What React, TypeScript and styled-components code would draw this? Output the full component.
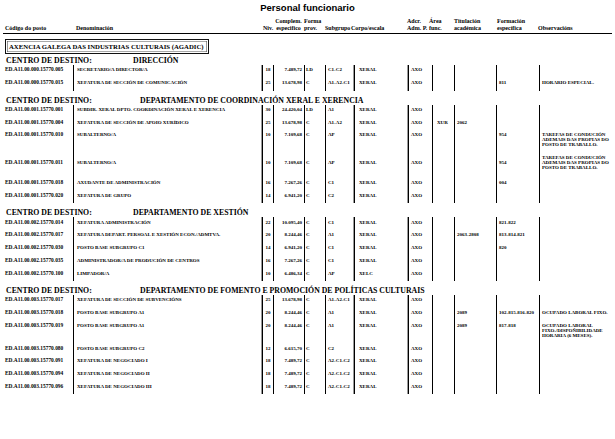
import React from 'react';
import styled, { createGlobalStyle } from 'styled-components';

const GlobalStyle = createGlobalStyle`
  html, body { margin: 0; padding: 0; background: #fff; }
  body { font-family: 'Liberation Serif', 'Times New Roman', serif; color: #000; }
`;

const COLS = '73px 189px 11px 31px 21px 29px 54px 24px 22px 42px 43px 76px';
const HEAD_COLS = '70px 189px 11px 31px 21px 26px 56px 20px 27px 43px 41px 74px';

interface Post {
  code: string;
  name: string;
  niv: string;
  complem: string;
  forma: string;
  subgrupo: string;
  corpo: string;
  adcr: string;
  area?: string;
  tit?: string;
  form?: string;
  obs?: string[];
  h?: number;
  lead?: number;
}

interface Centre {
  name: string;
  indent: number;
  posts: Post[];
}

const TAREFAS = ['TAREFAS DE CONDUCIÓN', 'ADEMAIS DAS PROPIAS DO', 'POSTO DE TRABALLO.'];

const centres: Centre[] = [
  {
    name: 'DIRECCIÓN',
    indent: 133,
    posts: [
      { code: 'ED.A11.00.000.15770.005', name: 'SECRETARIO/A DIRECTOR/A', niv: '18', complem: '7.489,72', forma: 'LD', subgrupo: 'C1-C2', corpo: 'XERAL', adcr: 'AXO', h: 13 },
      { code: 'ED.A11.00.000.15770.015', name: 'XEFATURA DE SECCIÓN DE COMUNICACIÓN', niv: '25', complem: '13.678,98', forma: 'C', subgrupo: 'A1-A2-C1', corpo: 'XERAL', adcr: 'AXO', form: '811', obs: ['HORARIO ESPECIAL.'], h: 13 },
    ],
  },
  {
    name: 'DEPARTAMENTO DE COORDINACIÓN XERAL E XERENCIA',
    indent: 140,
    posts: [
      { code: 'ED.A11.00.001.15770.001', name: 'SUBDIR. XERAL DPTO. COORDINACIÓN XERAL E XERENCIA', niv: '30', complem: '24.420,04', forma: 'LD', subgrupo: 'A1', corpo: 'XERAL', adcr: 'AXO' },
      { code: 'ED.A11.00.001.15770.004', name: 'XEFATURA DE SECCIÓN DE APOIO XURÍDICO', niv: '25', complem: '13.678,98', forma: 'C', subgrupo: 'A1-A2', corpo: 'XERAL', adcr: 'AXO', area: 'XUR', tit: '2062' },
      { code: 'ED.A11.00.001.15770.010', name: 'SUBALTERNO/A', niv: '10', complem: '7.109,68', forma: 'C', subgrupo: 'AP', corpo: 'XERAL', adcr: 'AXO', form: '954', obs: TAREFAS, h: 23 },
      { code: 'ED.A11.00.001.15770.011', name: 'SUBALTERNO/A', niv: '10', complem: '7.109,68', forma: 'C', subgrupo: 'AP', corpo: 'XERAL', adcr: 'AXO', form: '954', obs: TAREFAS, h: 25, lead: 5 },
      { code: 'ED.A11.00.001.15770.018', name: 'AXUDANTE DE ADMINISTRACIÓN', niv: '16', complem: '7.267,26', forma: 'C', subgrupo: 'C1', corpo: 'XERAL', adcr: 'AXO', form: '004' },
      { code: 'ED.A11.00.001.15770.020', name: 'XEFATURA DE GRUPO', niv: '14', complem: '6.941,20', forma: 'C', subgrupo: 'C2', corpo: 'XERAL', adcr: 'AXO' },
    ],
  },
  {
    name: 'DEPARTAMENTO DE XESTIÓN',
    indent: 133,
    posts: [
      { code: 'ED.A11.00.002.15770.014', name: 'XEFATURA ADMINISTRACIÓN', niv: '22', complem: '10.095,40', forma: 'C', subgrupo: 'C1', corpo: 'XERAL', adcr: 'AXO', form: '821-822' },
      { code: 'ED.A11.00.002.15770.017', name: 'XEFATURA DEPART. PERSOAL E XESTIÓN ECON./ADMTVA.', niv: '20', complem: '8.244,46', forma: 'C', subgrupo: 'A1', corpo: 'XERAL', adcr: 'AXO', tit: '2063-2808', form: '813-814-821' },
      { code: 'ED.A11.00.002.15770.030', name: 'POSTO BASE SUBGRUPO C1', niv: '14', complem: '6.941,20', forma: 'C', subgrupo: 'C1', corpo: 'XERAL', adcr: 'AXO', form: '820' },
      { code: 'ED.A11.00.002.15770.035', name: 'ADMINISTRADOR/A DE PRODUCIÓN DE CENTROS', niv: '16', complem: '7.267,26', forma: 'C', subgrupo: 'C1', corpo: 'XERAL', adcr: 'AXO' },
      { code: 'ED.A11.00.002.15770.100', name: 'LIMPADOR/A', niv: '10', complem: '6.486,34', forma: 'C', subgrupo: 'AP', corpo: 'XELC', adcr: 'AXO' },
    ],
  },
  {
    name: 'DEPARTAMENTO DE FOMENTO E PROMOCIÓN DE POLÍTICAS CULTURAIS',
    indent: 140,
    posts: [
      { code: 'ED.A11.00.003.15770.017', name: 'XEFATURA DE SECCIÓN DE SUBVENCIÓNS', niv: '25', complem: '13.678,98', forma: 'C', subgrupo: 'A1-A2-C1', corpo: 'XERAL', adcr: 'AXO' },
      { code: 'ED.A11.00.003.15770.018', name: 'POSTO BASE SUBGRUPO A1', niv: '20', complem: '8.244,46', forma: 'C', subgrupo: 'A1', corpo: 'XERAL', adcr: 'AXO', tit: '2089', form: '102-815-816-820', obs: ['OCUPADO LABORAL FIXO.'] },
      { code: 'ED.A11.00.003.15770.019', name: 'POSTO BASE SUBGRUPO A1', niv: '20', complem: '8.244,46', forma: 'C', subgrupo: 'A1', corpo: 'XERAL', adcr: 'AXO', tit: '2089', form: '817-818', obs: ['OCUPADO LABORAL', 'FIXO./DISPOÑIBILIDADE', 'HORARIA (6 MESES).'], h: 23 },
      { code: 'ED.A11.00.003.15770.080', name: 'POSTO BASE SUBGRUPO C2', niv: '12', complem: '6.615,70', forma: 'C', subgrupo: 'C2', corpo: 'XERAL', adcr: 'AXO' },
      { code: 'ED.A11.00.003.15770.091', name: 'XEFATURA DE NEGOCIADO I', niv: '18', complem: '7.489,72', forma: 'C', subgrupo: 'A2-C1-C2', corpo: 'XERAL', adcr: 'AXO' },
      { code: 'ED.A11.00.003.15770.094', name: 'XEFATURA DE NEGOCIADO II', niv: '18', complem: '7.489,72', forma: 'C', subgrupo: 'A2-C1-C2', corpo: 'XERAL', adcr: 'AXO' },
      { code: 'ED.A11.00.003.15770.096', name: 'XEFATURA DE NEGOCIADO III', niv: '18', complem: '7.489,72', forma: 'C', subgrupo: 'A2-C1-C2', corpo: 'XERAL', adcr: 'AXO' },
    ],
  },
];

const Page = styled.div`
  width: 615px;
  padding-top: 1px;
`;

const Title = styled.h1`
  margin: 0;
  height: 14px;
  line-height: 14px;
  text-align: center;
  font-family: 'Liberation Sans', Arial, sans-serif;
  font-size: 9.5px;
  font-weight: bold;
`;

const HeaderRow = styled.div`
  display: grid;
  grid-template-columns: ${HEAD_COLS};
  align-items: end;
  height: 17.5px;
  margin: 0 3px;
  border-bottom: 1px solid #000;
`;

const HeadLabel = styled.div<{ $pl?: number; $center?: boolean }>`
  padding-left: ${(p) => p.$pl ?? 0}px;
  text-align: ${(p) => (p.$center ? 'center' : 'left')};
  font-size: 6px;
  line-height: 7.5px;
  font-weight: bold;
  white-space: nowrap;
`;

const AgencyBox = styled.div`
  display: inline-flex;
  align-items: center;
  margin: 5px 0 0 5px;
  width: 204px;
  height: 15px;
  box-sizing: border-box;
  padding-left: 3px;
  border: 1.5px solid #111;
  box-shadow: inset 0 0 0 1px #fff, inset 0 0 0 1.6px #555;
  font-size: 6.75px;
  font-weight: bold;
  white-space: nowrap;
`;

const Section = styled.section`
  margin-top: 5px;
  &:first-of-type {
    margin-top: 2px;
  }
`;

const CentreHead = styled.div<{ $indent: number }>`
  display: grid;
  grid-template-columns: ${(p) => p.$indent - 6}px auto;
  padding-left: 6px;
  height: 9px;
  line-height: 9px;
  font-size: 7.8px;
  font-weight: bold;
  white-space: nowrap;
`;

const Row = styled.div<{ $h: number }>`
  display: grid;
  grid-template-columns: ${COLS};
  height: ${(p) => p.$h}px;
`;

const Cell = styled.div<{
  $pl?: number;
  $pr?: number;
  $align?: 'left' | 'center' | 'right';
  $first?: boolean;
  $double?: boolean;
  $size?: number;
  $lead?: number;
}>`
  border-left: ${(p) => (p.$first ? 'none' : '1px solid #000')};
  box-shadow: ${(p) => (p.$double ? '-1px 0 0 #9a9a9a' : 'none')};
  padding: ${(p) => 2.5 + (p.$lead ?? 0)}px ${(p) => p.$pr ?? 0}px 0 ${(p) => p.$pl ?? 0}px;
  text-align: ${(p) => p.$align ?? 'left'};
  font-size: ${(p) => p.$size ?? 5}px;
  line-height: 5px;
  font-weight: bold;
  white-space: nowrap;
`;

function PostRow({ post }: { post: Post }) {
  const lead = post.lead ?? 0;
  return (
    <Row $h={post.h ?? 12.7}>
      <Cell $first $pl={5} $size={5.4} $lead={lead}>{post.code}</Cell>
      <Cell $pl={3} $lead={lead}>{post.name}</Cell>
      <Cell $align="center" $double $lead={lead}>{post.niv}</Cell>
      <Cell $align="right" $pr={2} $lead={lead}>{post.complem}</Cell>
      <Cell $pl={1} $lead={lead}>{post.forma}</Cell>
      <Cell $pl={2} $lead={lead}>{post.subgrupo}</Cell>
      <Cell $pl={4} $double $lead={lead}>{post.corpo}</Cell>
      <Cell $pl={2} $double $lead={lead}>{post.adcr}</Cell>
      <Cell $pl={4} $lead={lead}>{post.area}</Cell>
      <Cell $pl={2} $lead={lead}>{post.tit}</Cell>
      <Cell $pl={2} $lead={lead}>{post.form}</Cell>
      <Cell $pl={2}>
        {post.obs?.map((line, i) => (
          <div key={i}>{line}</div>
        ))}
      </Cell>
    </Row>
  );
}

export default function App() {
  return (
    <>
      <GlobalStyle />
      <Page>
        <Title>Personal funcionario</Title>
        <HeaderRow>
          <HeadLabel $pl={2}>Código do posto</HeadLabel>
          <HeadLabel $pl={3}>Denominación</HeadLabel>
          <HeadLabel $pl={1}>Niv.</HeadLabel>
          <HeadLabel $center>
            Complem.
            <br />
            especifico
          </HeadLabel>
          <HeadLabel>
            Forma
            <br />
            prov.
          </HeadLabel>
          <HeadLabel>Subgrupo</HeadLabel>
          <HeadLabel>Corpo/escala</HeadLabel>
          <HeadLabel>
            Adcr.
            <br />
            Adm. P.
          </HeadLabel>
          <HeadLabel $pl={2}>
            Área
            <br />
            func.
          </HeadLabel>
          <HeadLabel>
            Titulación
            <br />
            académica
          </HeadLabel>
          <HeadLabel>
            Formación
            <br />
            específica
          </HeadLabel>
          <HeadLabel>Observacións</HeadLabel>
        </HeaderRow>
        <AgencyBox>AXENCIA GALEGA DAS INDUSTRIAS CULTURAIS (AGADIC)</AgencyBox>
        {centres.map((centre) => (
          <Section key={centre.name}>
            <CentreHead $indent={centre.indent}>
              <span>CENTRO DE DESTINO:</span>
              <span>{centre.name}</span>
            </CentreHead>
            {centre.posts.map((post) => (
              <PostRow key={post.code} post={post} />
            ))}
          </Section>
        ))}
      </Page>
    </>
  );
}
